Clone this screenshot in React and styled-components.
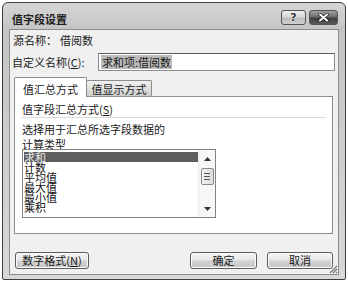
import React from 'react'
import styled, { createGlobalStyle } from 'styled-components'

const GlobalStyle = createGlobalStyle`
  body {
    margin: 0;
    background: #ffffff;
    font-family: "Noto Sans CJK SC", "Noto Sans", sans-serif;
    font-size: 11px;
    color: #1a1a1a;
  }
`

const Window = styled.div`
  box-sizing: border-box;
  margin: 2px 0 0 2px;
  width: 344px;
  height: 278px;
  border: 1px solid #3e3e3e;
  border-radius: 6px 6px 2px 2px;
  background: linear-gradient(180deg, #d6d6d6 0%, #c4c4c4 10%, #cfcfcf 60%, #d8d8d8 100%);
  padding: 0 6px 4px 6px;
  display: flex;
  flex-direction: column;
`

const TitleBar = styled.div`
  height: 26px;
  display: flex;
  align-items: flex-start;
`

const Title = styled.div`
  margin: 10px 0 0 3px;
  line-height: 13px;
  font-weight: bold;
  color: #202020;
`

const CaptionButtons = styled.div`
  margin: 7px 1px 0 auto;
  display: flex;
  gap: 3px;
`

const CaptionButton = styled.div`
  box-sizing: border-box;
  width: ${(p) => (p.$close ? 29 : 25)}px;
  height: 15px;
  border: 1px solid #555;
  border-radius: 3px;
  display: flex;
  align-items: center;
  justify-content: center;
  background: ${(p) =>
    p.$close
      ? 'linear-gradient(180deg, #a0a0a0 0%, #6e6e6e 45%, #3e3e3e 55%, #5a5a5a 100%)'
      : 'linear-gradient(180deg, #f0f0f0 0%, #d8d8d8 45%, #bdbdbd 55%, #cfcfcf 100%)'};
  font-family: "DejaVu Sans", sans-serif;
  font-weight: bold;
  font-size: 11px;
  line-height: 13px;
  color: #3a3a3a;
  text-shadow: 0 0 2px #fff;
`

const Client = styled.div`
  position: relative;
  flex: 1;
  border: 1px solid #8c8c8c;
  background: #f0f0f0;
  display: flex;
  flex-direction: column;
  padding: 2px 3px 0 2px;
`

const SourceRow = styled.div`
  height: 16px;
  line-height: 16px;
  padding-left: 1px;
`

const SourceValue = styled.span`
  margin-left: 3px;
`

const NameRow = styled.div`
  margin-top: 4px;
  height: 20px;
  display: flex;
  align-items: center;
`

const Label = styled.span`
  line-height: 14px;
`

const TextBox = styled.div`
  box-sizing: border-box;
  margin-left: auto;
  width: 237px;
  height: 18px;
  border: 1px solid #8a8a8a;
  border-top-color: #5e5e5e;
  background: #fff;
  padding: 1px 2px;
  display: flex;
  align-items: center;
`

const Selected = styled.span`
  background: #bcbcbc;
  line-height: 14px;
  padding: 0 1px;
`

const TabStrip = styled.div`
  margin: 5px 0 0 2px;
  height: 19px;
  display: flex;
  align-items: flex-end;
`

const Tab = styled.div`
  box-sizing: border-box;
  position: relative;
  z-index: ${(p) => (p.$active ? 2 : 1)};
  width: ${(p) => p.$w}px;
  height: ${(p) => (p.$active ? 20 : 16)}px;
  margin-bottom: ${(p) => (p.$active ? -1 : 0)}px;
  margin-left: ${(p) => (p.$active ? 0 : -1)}px;
  border: 1px solid #8c8c8c;
  border-bottom: none;
  border-radius: 2px 2px 0 0;
  background: ${(p) =>
    p.$active ? '#ffffff' : 'linear-gradient(180deg, #f0f0f0 0%, #e0e0e0 50%, #cdcdcd 100%)'};
  text-align: center;
  line-height: 14px;
  padding-top: ${(p) => (p.$active ? 4 : 1)}px;
`

const Panel = styled.div`
  box-sizing: border-box;
  margin: 0 2px 0 2px;
  height: 138px;
  border: 1px solid #8c8c8c;
  background: #fff;
  padding: 4px 6px 0 6px;
  display: flex;
  flex-direction: column;
`

const GroupLabel = styled.div`
  line-height: 16px;
  padding-left: 1px;
`

const Separator = styled.div`
  border-top: 1px solid #dadada;
`

const Desc = styled.div`
  margin-top: 4px;
  line-height: 15px;
  padding-left: 1px;
`

const ListBox = styled.div`
  box-sizing: border-box;
  margin: -3px 0 0 1px;
  width: 194px;
  height: 69px;
  border: 1px solid #828282;
  display: flex;
  background: #fff;
`

const Items = styled.div`
  flex: 1;
  padding: 2px 0 0 1px;
  overflow: hidden;
`

const Item = styled.div`
  height: 10px;
  line-height: 10px;
  white-space: nowrap;
  padding-left: 0;
  background: ${(p) => (p.$selected ? '#5e5e5e' : 'transparent')};
  color: ${(p) => (p.$selected ? '#e8e8e8' : '#111')};
`

const ScrollBar = styled.div`
  width: 16px;
  border-left: 1px solid #ececec;
  background: #f7f7f7;
  display: flex;
  flex-direction: column;
  align-items: center;
`

const ArrowBox = styled.div`
  height: 17px;
  display: flex;
  align-items: center;
  justify-content: center;
`

const Thumb = styled.div`
  box-sizing: border-box;
  margin-top: 1px;
  width: 13px;
  height: 17px;
  border: 1px solid #8a8a8a;
  border-radius: 2px;
  background: linear-gradient(90deg, #f4f4f4, #dcdcdc);
  display: flex;
  flex-direction: column;
  align-items: center;
  justify-content: center;
  gap: 2px;
`

const Grip = styled.div`
  width: 6px;
  border-top: 1px solid #555;
`

const Spacer = styled.div`
  flex: 1;
`

const ButtonRow = styled.div`
  margin-top: 18px;
  display: flex;
  padding: 0 2px 0 3px;
`

const Button = styled.div`
  box-sizing: border-box;
  width: ${(p) => p.$w}px;
  height: 17px;
  margin-left: ${(p) => p.$ml || 0}px;
  border: 1px solid #5c5c5c;
  border-radius: 3px;
  background: linear-gradient(180deg, #f6f6f6 0%, #e6e6e6 48%, #d2d2d2 52%, #c8c8c8 100%);
  box-shadow: inset 0 0 0 1px #fbfbfb;
  text-align: center;
  line-height: 15px;
`

const ResizeGrip = styled.svg`
  position: absolute;
  right: 0;
  bottom: 0;
`

function CloseGlyph() {
  return (
    <svg width="11" height="9" viewBox="0 0 11 9">
      <path d="M2 1.5 L9 7.5 M9 1.5 L2 7.5" stroke="#222" strokeWidth="3.4" strokeLinecap="round" />
      <path d="M2 1.5 L9 7.5 M9 1.5 L2 7.5" stroke="#fff" strokeWidth="2" strokeLinecap="round" />
    </svg>
  )
}

function Arrow({ down }) {
  return (
    <svg width="7" height="4" viewBox="0 0 7 4">
      <path d={down ? 'M0 0 L7 0 L3.5 4 Z' : 'M0 4 L7 4 L3.5 0 Z'} fill="#333" />
    </svg>
  )
}

const items = ['求和', '计数', '平均值', '最大值', '最小值', '乘积']

export default function App() {
  return (
    <>
      <GlobalStyle />
      <Window>
        <TitleBar>
          <Title>值字段设置</Title>
          <CaptionButtons>
            <CaptionButton>?</CaptionButton>
            <CaptionButton $close>
              <CloseGlyph />
            </CaptionButton>
          </CaptionButtons>
        </TitleBar>
        <Client>
          <SourceRow>
            源名称：<SourceValue>借阅数</SourceValue>
          </SourceRow>
          <NameRow>
            <Label>
              自定义名称(<u>C</u>):
            </Label>
            <TextBox>
              <Selected>求和项:借阅数</Selected>
            </TextBox>
          </NameRow>
          <TabStrip>
            <Tab $active $w={73}>值汇总方式</Tab>
            <Tab $w={66}>值显示方式</Tab>
          </TabStrip>
          <Panel>
            <GroupLabel>
              值字段汇总方式(<u>S</u>)
            </GroupLabel>
            <Separator />
            <Desc>
              选择用于汇总所选字段数据的
              <br />
              计算类型
            </Desc>
            <ListBox>
              <Items>
                {items.map((it, i) => (
                  <Item key={it} $selected={i === 0}>
                    {it}
                  </Item>
                ))}
              </Items>
              <ScrollBar>
                <ArrowBox>
                  <Arrow />
                </ArrowBox>
                <Thumb>
                  <Grip />
                  <Grip />
                  <Grip />
                </Thumb>
                <Spacer />
                <ArrowBox>
                  <Arrow down />
                </ArrowBox>
              </ScrollBar>
            </ListBox>
          </Panel>
          <ButtonRow>
            <Button $w={74}>
              数字格式(<u>N</u>)
            </Button>
            <Button $w={67} $ml={101}>
              确定
            </Button>
            <Button $w={66} $ml={10}>
              取消
            </Button>
          </ButtonRow>
          <ResizeGrip width="10" height="10" viewBox="0 0 10 10">
            <path d="M9 2 L2 9 M9 5 L5 9 M9 8 L8 9" stroke="#777" strokeWidth="1.2" />
          </ResizeGrip>
        </Client>
      </Window>
    </>
  )
}
